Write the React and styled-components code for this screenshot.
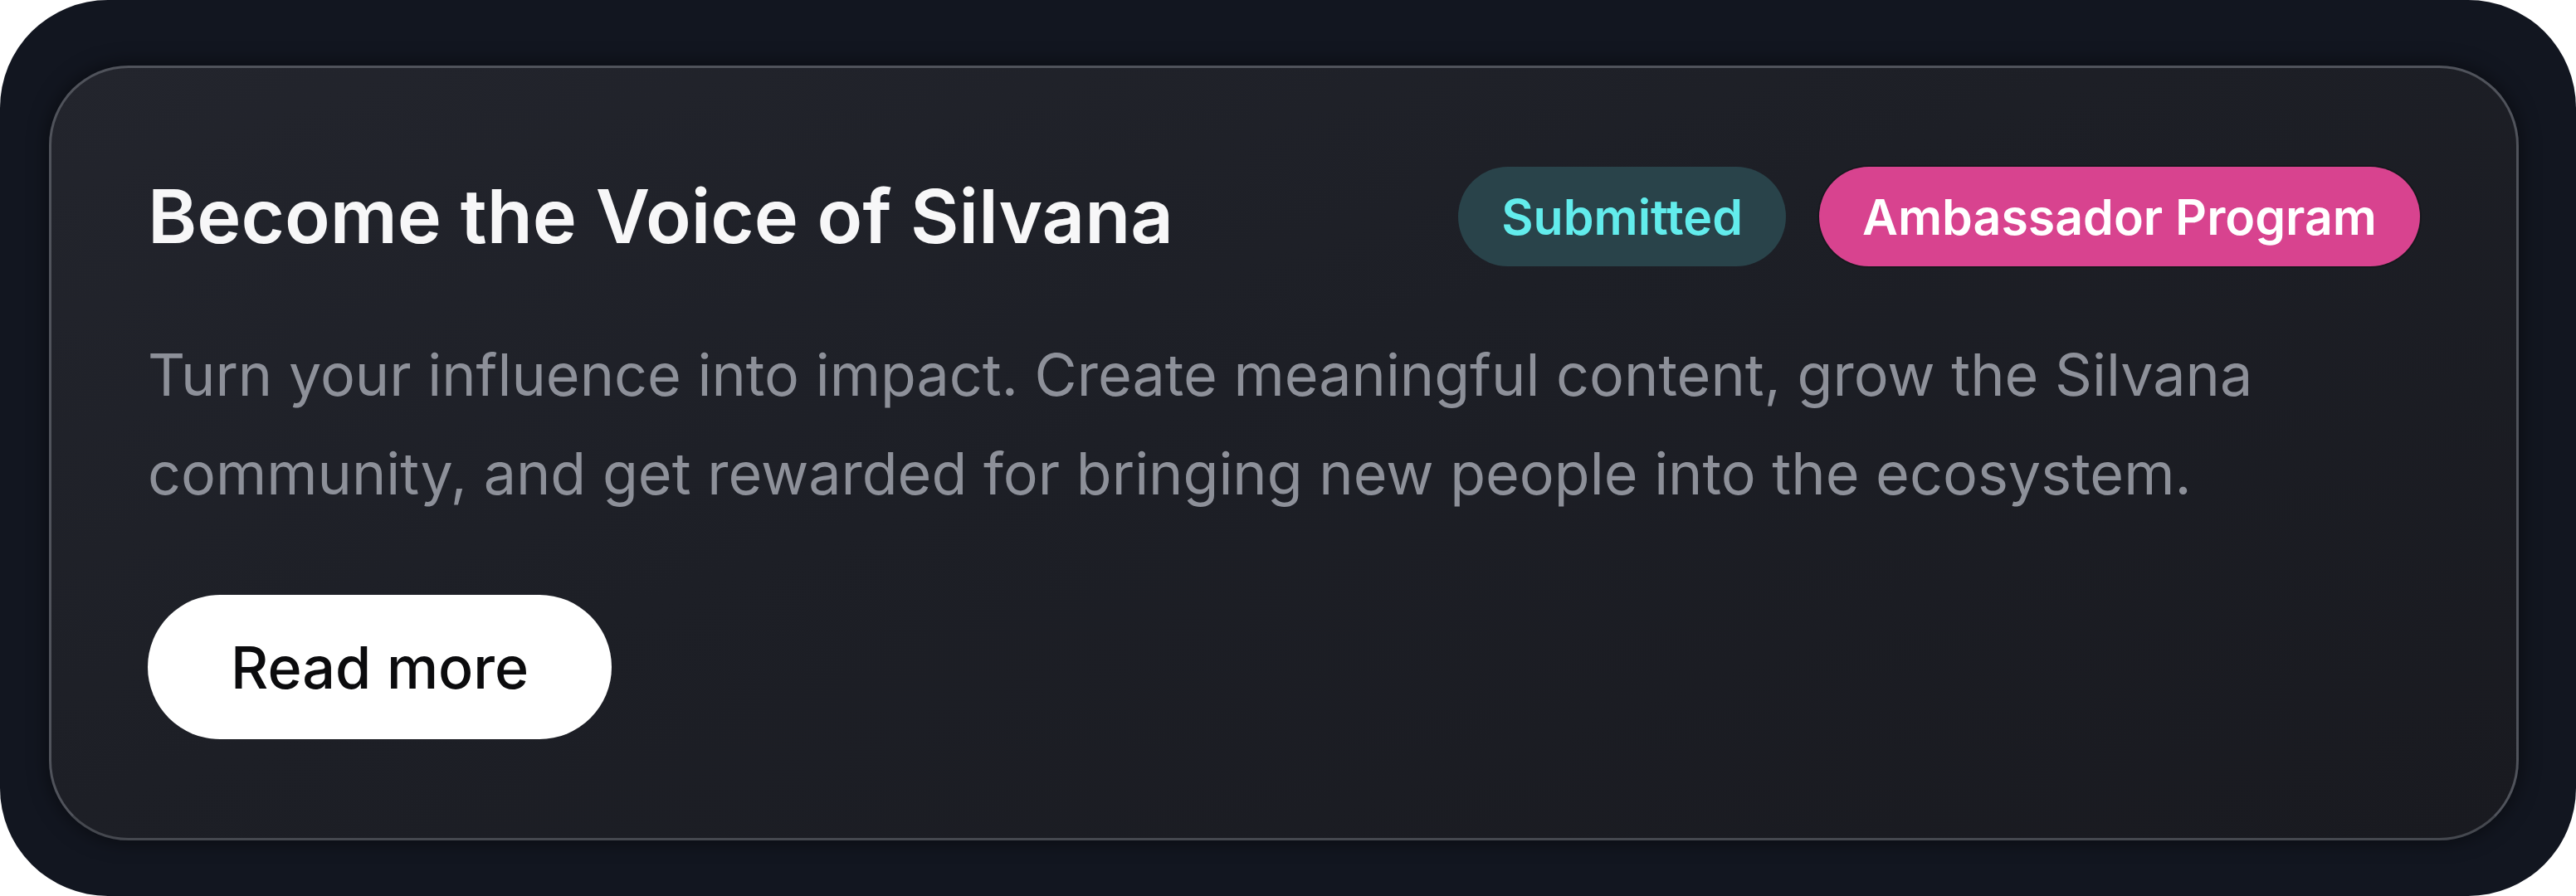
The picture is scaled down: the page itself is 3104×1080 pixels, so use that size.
import React from 'react'
import styled, { createGlobalStyle } from 'styled-components'

const Global = createGlobalStyle`
html, body {
  margin: 0;
  padding: 0;
  background: #ffffff;
}
* {
  box-sizing: border-box;
}
`

function App() {
  return (
    <>
      <Global />
      <Frame>
        <Card>
          <Header>
            <Title>Become the Voice of Silvana</Title>
            <Badges>
              <Badge tone='status'>Submitted</Badge>
              <Badge tone='program'>Ambassador Program</Badge>
            </Badges>
          </Header>
          <Desc>
            Turn your influence into impact. Create meaningful content, grow the Silvana
            community, and get rewarded for bringing new people into the ecosystem.
          </Desc>
          <ReadMore>Read more</ReadMore>
        </Card>
      </Frame>
    </>
  )
}
export default App

const Frame = styled.div`
width: 3104px;
height: 1080px;
padding: 79px 69px 67px 59px;
border-radius: 130px;
background: #121620;
font-family: Inter, 'Noto Sans', sans-serif;
display: flex;
`

const Card = styled.div`
flex: 1;
display: flex;
flex-direction: column;
align-items: flex-start;
padding: 119px 116px;
border: 3px solid #50535b;
border-bottom-color: #45484f;
border-radius: 96px;
background: linear-gradient(160deg, #23252d 0%, #1d1f26 45%, #191a20 100%);
box-shadow: 0 0 24px rgba(0, 0, 0, 0.55);
`

const Header = styled.div`
width: 100%;
display: flex;
justify-content: space-between;
align-items: center;
`

const Title = styled.h2`
margin: 0;
font-size: 90px;
font-weight: 600;
color: #f7f7f8;
line-height: 1.2;
`

const Badges = styled.div`
display: flex;
align-items: center;
gap: 40px;
`

const Badge = styled.span`
height: 120px;
display: inline-flex;
align-items: center;
padding: 0 52px;
border-radius: 999px;
font-size: 59px;
font-weight: 600;
background: ${p => p.tone === 'program' ? '#d8438f' : '#29434a'};
color: ${p => p.tone === 'program' ? '#ffffff' : '#62ecec'};
box-shadow: ${p => p.tone === 'program' ? '0 0 0 2px rgba(0,0,0,0.2)' : 'none'};
`

const Desc = styled.p`
margin: 71px 0 0;
font-size: 70px;
line-height: 119px;
color: #8d9099;
font-weight: 400;
`

const ReadMore = styled.button`
margin-top: 87px;
height: 174px;
padding: 0 100px;
border: none;
border-radius: 999px;
background: #ffffff;
color: #0b0b0d;
font-family: inherit;
font-size: 70px;
font-weight: 500;
cursor: pointer;
`
